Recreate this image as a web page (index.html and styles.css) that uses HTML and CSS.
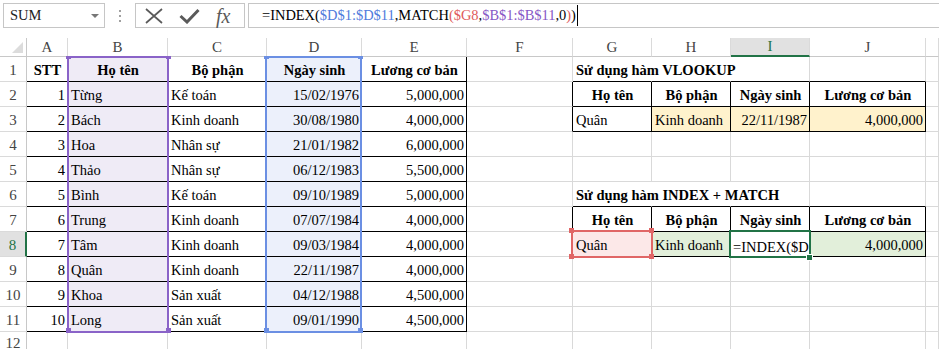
FILE: index.html
```html
<!DOCTYPE html>
<html lang="vi">
<head>
    <meta charset="UTF-8">
    <meta name="viewport" content="width=device-width, initial-scale=1.0">
    <title>INDEX + MATCH</title>
    <link rel="stylesheet" href="styles.css">
</head>
<body>
    <div class="bar">
        <div class="name-box">SUM<span class="caret"></span></div>
        <div class="dots"><i></i><i></i><i></i></div>
        <div class="fx-box">
            <svg class="ico-x" width="18" height="16" viewBox="0 0 18 16"><path d="M1 1 L17 15 M17 1 L1 15" stroke="#5a5a5a" stroke-width="1.7" fill="none"/></svg>
            <svg class="ico-ok" width="21" height="16" viewBox="0 0 21 16"><path d="M1.5 8 L8 14 L19.5 2" stroke="#5a5a5a" stroke-width="3" fill="none"/></svg>
            <span class="fx">fx</span>
        </div>
        <div class="formula">=INDEX(<span class="rf-d">$D$1:$D$11</span>,MATCH<span class="rf-g">(</span><span class="rf-g">$G8</span>,<span class="rf-b">$B$1:$B$11</span>,0<span class="rf-g">)</span>)<span class="cursor"></span></div>
    </div>

    <div class="sheet">
        <div class="corner"><span class="tri"></span></div>
        <div class="ch">A</div><div class="ch">B</div><div class="ch">C</div><div class="ch">D</div><div class="ch">E</div><div class="ch">F</div>
        <div class="ch">G</div><div class="ch">H</div><div class="ch sel">I</div><div class="ch">J</div><div class="ch"></div>

        <div class="rh">1</div>
        <div class="c k m h">STT</div><div class="c k m h pu">Họ tên</div><div class="c k m h">Bộ phận</div><div class="c k m h bl">Ngày sinh</div><div class="c k m h">Lương cơ bản</div>
        <div class="c"></div>
        <div class="c h nr kb">Sử dụng hàm VLOOKUP</div><div class="c nr kb"></div><div class="c kb"></div><div class="c kb"></div><div class="c"></div>

        <div class="rh">2</div>
        <div class="c k r">1</div><div class="c k pu">Từng</div><div class="c k">Kế toán</div><div class="c k r bl">15/02/1976</div><div class="c k r">5,000,000</div>
        <div class="c kr"></div>
        <div class="c k m h">Họ tên</div><div class="c k m h">Bộ phận</div><div class="c k m h">Ngày sinh</div><div class="c k m h">Lương cơ bản</div><div class="c"></div>

        <div class="rh">3</div>
        <div class="c k r">2</div><div class="c k pu">Bách</div><div class="c k">Kinh doanh</div><div class="c k r bl">30/08/1980</div><div class="c k r">4,000,000</div>
        <div class="c kr"></div>
        <div class="c k">Quân</div><div class="c k pe">Kinh doanh</div><div class="c k r pe">22/11/1987</div><div class="c k r pe">4,000,000</div><div class="c"></div>

        <div class="rh">4</div>
        <div class="c k r">3</div><div class="c k pu">Hoa</div><div class="c k">Nhân sự</div><div class="c k r bl">21/01/1982</div><div class="c k r">6,000,000</div>
        <div class="c"></div><div class="c"></div><div class="c"></div><div class="c"></div><div class="c"></div><div class="c"></div>

        <div class="rh">5</div>
        <div class="c k r">4</div><div class="c k pu">Thảo</div><div class="c k">Nhân sự</div><div class="c k r bl">06/12/1983</div><div class="c k r">5,500,000</div>
        <div class="c"></div><div class="c"></div><div class="c"></div><div class="c"></div><div class="c"></div><div class="c"></div>

        <div class="rh">6</div>
        <div class="c k r">5</div><div class="c k pu">Bình</div><div class="c k">Kế toán</div><div class="c k r bl">09/10/1989</div><div class="c k r">5,000,000</div>
        <div class="c"></div>
        <div class="c h nr kb">Sử dụng hàm INDEX + MATCH</div><div class="c nr kb"></div><div class="c kb"></div><div class="c kb"></div><div class="c"></div>

        <div class="rh">7</div>
        <div class="c k r">6</div><div class="c k pu">Trung</div><div class="c k">Kinh doanh</div><div class="c k r bl">07/07/1984</div><div class="c k r">4,000,000</div>
        <div class="c kr"></div>
        <div class="c k m h">Họ tên</div><div class="c k m h">Bộ phận</div><div class="c k m h">Ngày sinh</div><div class="c k m h">Lương cơ bản</div><div class="c"></div>

        <div class="rh sel">8</div>
        <div class="c k r">7</div><div class="c k pu">Tâm</div><div class="c k">Kinh doanh</div><div class="c k r bl">09/03/1984</div><div class="c k r">4,000,000</div>
        <div class="c kr"></div>
        <div class="c k pk">Quân</div><div class="c k gr">Kinh doanh</div><div class="c k act">=INDEX($D</div><div class="c k r gr">4,000,000</div><div class="c"></div>

        <div class="rh">9</div>
        <div class="c k r">8</div><div class="c k pu">Quân</div><div class="c k">Kinh doanh</div><div class="c k r bl">22/11/1987</div><div class="c k r">4,000,000</div>
        <div class="c"></div><div class="c"></div><div class="c"></div><div class="c"></div><div class="c"></div><div class="c"></div>

        <div class="rh">10</div>
        <div class="c k r">9</div><div class="c k pu">Khoa</div><div class="c k">Sản xuất</div><div class="c k r bl">04/12/1988</div><div class="c k r">4,500,000</div>
        <div class="c"></div><div class="c"></div><div class="c"></div><div class="c"></div><div class="c"></div><div class="c"></div>

        <div class="rh">11</div>
        <div class="c k r">10</div><div class="c k pu">Long</div><div class="c k">Sản xuất</div><div class="c k r bl">09/01/1990</div><div class="c k r">4,500,000</div>
        <div class="c"></div><div class="c"></div><div class="c"></div><div class="c"></div><div class="c"></div><div class="c"></div>

        <div class="rh last">12</div>
        <div class="c"></div><div class="c"></div><div class="c"></div><div class="c"></div><div class="c"></div>
        <div class="c"></div><div class="c"></div><div class="c"></div><div class="c"></div><div class="c"></div><div class="c"></div>

        <!-- range highlights drawn over the grid -->
        <div class="range range-b"></div>
        <div class="hd hd-b top" style="left:66px"></div><div class="hd hd-b top" style="left:166px"></div>
        <div class="hd hd-b" style="left:66px; top:290px"></div><div class="hd hd-b" style="left:166px; top:290px"></div>

        <div class="range range-d"></div>
        <div class="hd hd-d top" style="left:264px"></div><div class="hd hd-d top" style="left:358px"></div>
        <div class="hd hd-d" style="left:264px; top:290px"></div><div class="hd hd-d" style="left:358px; top:290px"></div>

        <div class="range range-g"></div>
        <div class="hd hd-g" style="left:569px; top:190px"></div><div class="hd hd-g" style="left:649px; top:190px"></div>
        <div class="hd hd-g" style="left:569px; top:216px"></div><div class="hd hd-g" style="left:649px; top:216px"></div>

        <div class="active"></div>
        <div class="fill-handle"></div>
    </div>
</body>
</html>
```

FILE: styles.css
```css
body { margin: 0; width: 939px; height: 349px; overflow: hidden; background: #fff; color: #000; font-family: "Liberation Serif", "Times New Roman", serif; }

/* formula bar */
.bar { display: flex; align-items: flex-start; height: 38px; box-sizing: border-box; padding-top: 3px; }
.name-box { margin-left: 3px; width: 102px; height: 25px; box-sizing: border-box; border: 1px solid #c6c6c6; display: flex; align-items: center; justify-content: space-between; padding: 0 5px 0 6px; font-size: 14.5px; color: #222; }
.caret { width: 0; height: 0; border-left: 4px solid transparent; border-right: 4px solid transparent; border-top: 4px solid #777; }
.dots { width: 30px; display: flex; flex-direction: column; align-items: center; gap: 3px; padding-top: 7px; }
.dots i { display: block; width: 2px; height: 2px; background: #a0a0a0; }
.fx-box { width: 110px; height: 25px; box-sizing: border-box; border: 1px solid #c6c6c6; display: flex; align-items: center; }
.ico-x { margin-left: 9px; }
.ico-ok { margin-left: 16px; }
.fx { margin-left: 16px; font-style: italic; font-size: 20px; color: #5a5a5a; line-height: 1; }
.formula { margin-left: 3px; flex: 1; height: 25px; box-sizing: border-box; border: 1px solid #c6c6c6; border-right: none; padding-left: 13px; display: flex; align-items: center; white-space: nowrap; font-size: 14.45px; }
.rf-d { color: #4f7bdc; }
.rf-g { color: #e05a5a; }
.rf-b { color: #8757c6; }
.cursor { display: inline-block; width: 1px; height: 21px; background: #000; margin-left: 1px; }

/* grid */
.sheet { position: relative; display: grid; grid-template-columns: 27px 41px 100px 99px 95px 105px 106px 79px 79px 79px 116px 1fr; grid-template-rows: 19px repeat(12, 25px); }
.corner { border-right: 1px solid #c8c8c8; border-bottom: 1px solid #c8c8c8; display: flex; align-items: flex-end; justify-content: flex-end; padding: 0 3px 3px 0; box-sizing: border-box; }
.tri { width: 0; height: 0; border-left: 11px solid transparent; border-bottom: 11px solid #dcdcdc; }
.ch { border-right: 1px solid #dadada; border-bottom: 1px solid #c8c8c8; display: flex; align-items: center; justify-content: center; font-size: 15px; color: #444; box-sizing: border-box; }
.ch.sel { background: #e1e1e1; color: #217346; border-bottom: 2px solid #217346; }
.rh { border-right: 1px solid #c8c8c8; border-bottom: 1px solid #dadada; display: flex; align-items: center; justify-content: center; padding-top: 3px; font-size: 15px; color: #444; box-sizing: border-box; }
.rh.sel { background: #e1e1e1; color: #217346; border-right: 2px solid #217346; }
.rh.last { align-items: flex-start; padding-top: 3px; }

.c { min-width: 0; box-sizing: border-box; border-right: 1px solid #d9d9d9; border-bottom: 1px solid #d9d9d9; padding: 0 2px 2px 3px; display: flex; align-items: flex-end; white-space: nowrap; font-size: 14.5px; line-height: 17px; }
.k { border-right-color: #000; border-bottom-color: #000; }
.kr { border-right-color: #000; }
.kb { border-bottom-color: #000; }
.nr { border-right-color: transparent; }
.m { justify-content: center; }
.r { justify-content: flex-end; }
.h { font-weight: bold; }
.pu { background: #efebf6; }
.bl { background: #ecf0fb; }
.pe { background: #fff2cc; }
.gr { background: #e2efda; }
.pk { background: #fce8e8; }
.act { overflow: hidden; padding-bottom: 0; padding-left: 2px; }

/* overlays */
.range { position: absolute; box-sizing: border-box; border: 2px solid; }
.range-b { left: 67px; top: 18px; width: 102px; height: 277px; border-color: #8a63c8; }
.range-d { left: 265px; top: 18px; width: 97px; height: 277px; border-color: #6b8fe3; }
.range-g { left: 571px; top: 192px; width: 82px; height: 28px; border-color: #e06666; }
.hd { position: absolute; width: 5px; height: 5px; }
.hd.top { top: 18px; height: 3px; }
.hd-b { background: #8a63c8; }
.hd-d { background: #6b8fe3; }
.hd-g { background: #e06666; }
.active { position: absolute; left: 729px; top: 192px; width: 82px; height: 28px; box-sizing: border-box; border: 2px solid #217346; }
.fill-handle { position: absolute; left: 806px; top: 216px; width: 5px; height: 5px; background: #217346; border: 1px solid #fff; }
```
